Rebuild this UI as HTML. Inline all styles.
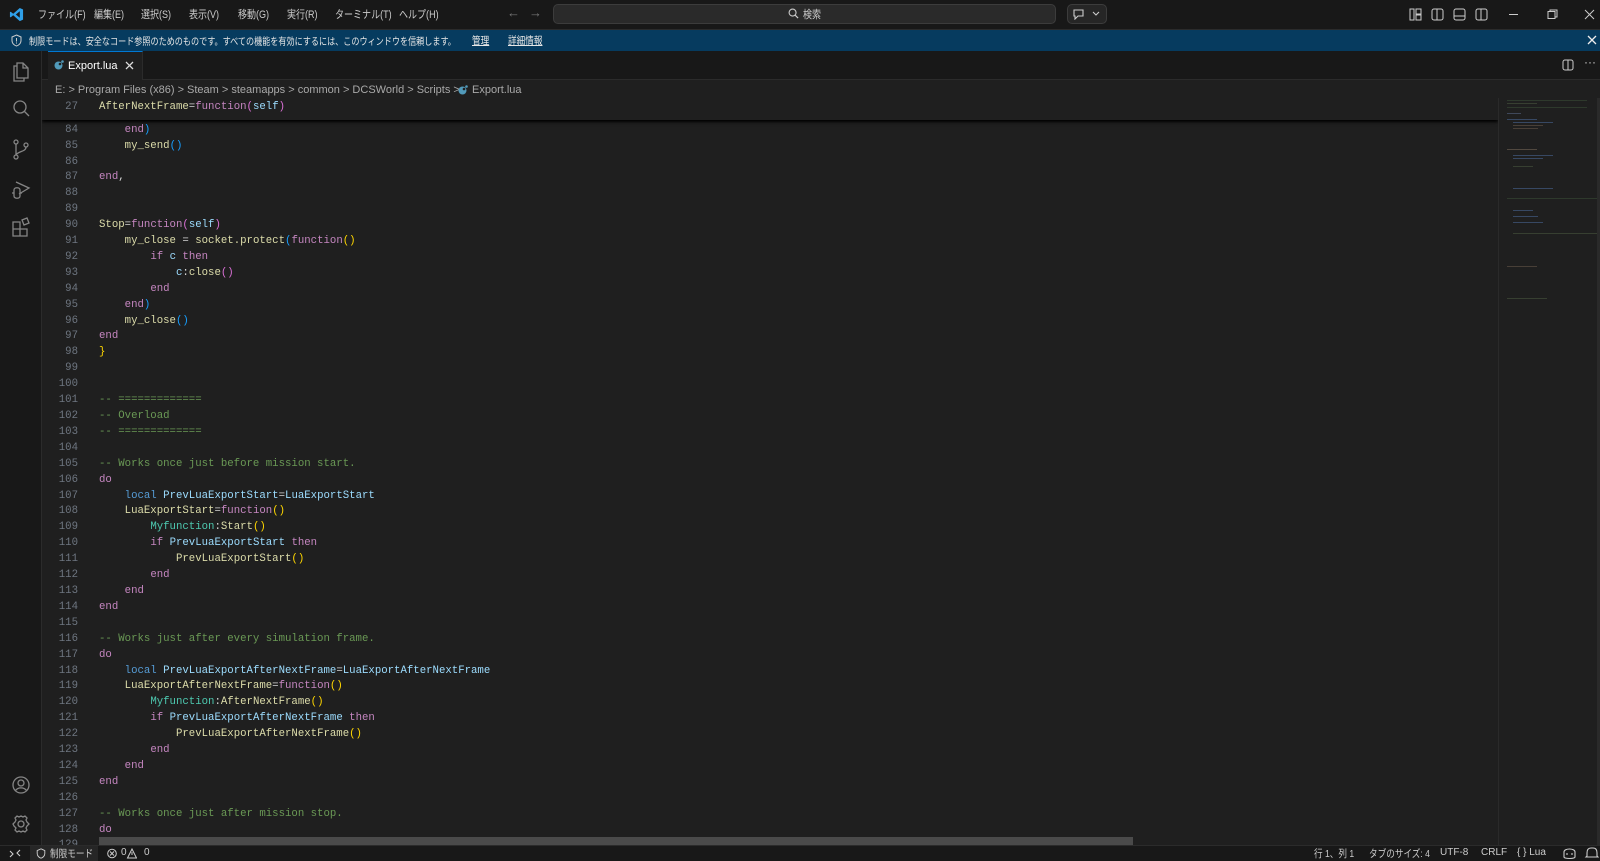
<!DOCTYPE html>
<html><head><meta charset="utf-8"><style>
*{margin:0;padding:0;box-sizing:border-box}
body{width:1600px;height:861px;overflow:hidden;background:#1f1f1f;font-family:"Liberation Sans","Noto Sans CJK JP",sans-serif;color:#ccc;position:relative}
.a{position:absolute}
.ui{font-size:11px;color:#cccccc;white-space:nowrap}
.sq{transform-origin:0 50%;transform:scaleX(0.82)}
#title{left:0;top:0;width:1600px;height:30px;background:#181818;border-bottom:1px solid #2b2b2b}
#banner{left:0;top:30px;width:1600px;height:21px;background:#063b5f}
#act{left:0;top:51px;width:42px;height:794px;background:#181818;border-right:1px solid #2b2b2b}
#tabs{left:42px;top:51px;width:1558px;height:29px;background:#181818;border-bottom:1px solid #2b2b2b}
#tab{left:48px;top:51px;width:95px;height:29px;background:#1f1f1f;border-top:1px solid #0078d4;border-right:1px solid #2b2b2b}
#status{left:0;top:845px;width:1600px;height:16px;background:#181818;border-top:1px solid #2b2b2b}
pre{font-family:"Liberation Mono",monospace;font-size:10.7px;line-height:15.9px;color:#d4d4d4;white-space:pre}
.ln{color:#6e7681;text-align:right;width:36px}
.k{color:#c586c0}.b{color:#569cd6}.v{color:#9cdcfe}.f{color:#dcdcaa}.t{color:#4ec9b0}.c{color:#6a9955}.p1{color:#ffd700}.p2{color:#da70d6}.p3{color:#179fff}
svg{position:absolute}
.mm{position:absolute;height:1px;opacity:.55}
</style></head><body>
<div id="title" class="a"></div>
<svg style="left:9px;top:7px" width="15" height="15" viewBox="0 0 16 16"><path d="M11.5 1 L15 2.6 V13.4 L11.5 15 L4.5 8.8 L1.8 11 L1 10.5 V5.5 L1.8 5 L4.5 7.2 Z M11.5 4.5 L7.3 8 L11.5 11.5Z" fill="#2f9fe8" fill-rule="evenodd"/></svg>
<div class="a ui sq" style="left:38px;top:6px">ファイル(F)</div>
<div class="a ui sq" style="left:94px;top:6px">編集(E)</div>
<div class="a ui sq" style="left:141px;top:6px">選択(S)</div>
<div class="a ui sq" style="left:189px;top:6px">表示(V)</div>
<div class="a ui sq" style="left:238px;top:6px">移動(G)</div>
<div class="a ui sq" style="left:287px;top:6px">実行(R)</div>
<div class="a ui sq" style="left:335px;top:6px">ターミナル(T)</div>
<div class="a ui sq" style="left:399px;top:6px">ヘルプ(H)</div>
<div class="a ui" style="left:507px;top:5px;color:#777;font-size:13px">←</div>
<div class="a ui" style="left:529px;top:5px;color:#777;font-size:13px">→</div>
<div class="a" style="left:553px;top:4px;width:503px;height:20px;background:#2a2a2a;border:1px solid #3c3c3c;border-radius:5px"></div>
<svg style="left:788px;top:8px" width="11" height="11" viewBox="0 0 12 12"><circle cx="5" cy="5" r="3.8" fill="none" stroke="#ccc" stroke-width="1.2"/><path d="M7.8 7.8 L11 11" stroke="#ccc" stroke-width="1.3"/></svg>
<div class="a ui sq" style="left:803px;top:6px">検索</div>
<div class="a" style="left:1067px;top:4px;width:40px;height:20px;background:#262626;border:1px solid #3c3c3c;border-radius:5px"></div>
<svg style="left:1072px;top:8px" width="30" height="12" viewBox="0 0 30 12"><path d="M2 2 H11 V8 H6 L3 11 V8 H2Z" fill="none" stroke="#ccc" stroke-width="1.1"/><path d="M21 4 L24 7 L27 4" fill="none" stroke="#ccc" stroke-width="1.1"/></svg>
<svg style="left:1409px;top:8px" width="90" height="13" viewBox="0 0 90 13"><g fill="none" stroke="#ccc" stroke-width="1"><rect x="1" y="1" width="4" height="11"/><rect x="7" y="1" width="5" height="5"/><rect x="7" y="7" width="5" height="5"/><rect x="23" y="1" width="11" height="11" rx="2"/><path d="M28 1 V12"/><rect x="45" y="1" width="11" height="11" rx="2"/><path d="M45 8 H56"/><rect x="67" y="1" width="11" height="11" rx="2"/><path d="M72 1 V12"/></g></svg>
<svg style="left:1508px;top:9px" width="90" height="11" viewBox="0 0 90 11"><g fill="none" stroke="#ccc" stroke-width="1"><path d="M1 5.5 H10"/><rect x="40" y="2.5" width="7" height="7"/><path d="M42 2.5 V1 H49 V8 H47"/><path d="M77 1 L86 10 M86 1 L77 10"/></g></svg>

<div id="banner" class="a"></div>
<svg style="left:11px;top:34px" width="11" height="13" viewBox="0 0 11 13"><path d="M5.5 1 L10 3 V6.5 C10 9.5 7.5 11.5 5.5 12 C3.5 11.5 1 9.5 1 6.5 V3Z" fill="none" stroke="#ccc" stroke-width="1"/><path d="M5.5 4 V7.5 M5.5 8.5 V9.5" stroke="#ccc"/></svg>
<div class="a ui" style="left:29px;top:33px;font-size:10px;color:#e6e6e6;transform-origin:0 50%;transform:scaleX(0.81)">制限モードは、安全なコード参照のためのものです。すべての機能を有効にするには、このウィンドウを信頼します。</div>
<div class="a ui sq" style="left:472px;top:33px;font-size:10.5px;color:#e6e6e6;text-decoration:underline">管理</div>
<div class="a ui sq" style="left:508px;top:33px;font-size:10.5px;color:#e6e6e6;text-decoration:underline">詳細情報</div>
<svg style="left:1587px;top:35px" width="10" height="10" viewBox="0 0 10 10"><path d="M1 1 L9 9 M9 1 L1 9" stroke="#eee" stroke-width="1.3"/></svg>

<div id="act" class="a"></div>
<svg style="left:11px;top:60px" width="20" height="190" viewBox="0 0 20 190" fill="none" stroke="#858585" stroke-width="1.3">
<path d="M6 3 H12 L17 8 V18 H6Z M12 3 V8 H17 M6 6 H3 V21 H13 V18"/>
<circle cx="9" cy="47" r="6"/><path d="M13.5 51.5 L18 56"/>
<circle cx="5" cy="82" r="2"/><circle cx="5" cy="97" r="2"/><circle cx="15" cy="85" r="2"/><path d="M5 84 V95 M15 87 C15 92 7 91 5 95"/>
<path d="M5 122 L18 128 L8 134 M3 130 C3 127 9 127 9 130 V136 C9 139 3 139 3 136Z M1 133 H3 M9 133 H11"/>
<path d="M2 162 H9 V169 H2Z M2 169 H9 V176 H2Z M9 169 H16 V176 H9Z M11 160 L16 158 L18 163 L13 165Z"/>
</svg>
<svg style="left:11px;top:775px" width="20" height="60" viewBox="0 0 20 60" fill="none" stroke="#858585" stroke-width="1.3">
<circle cx="10" cy="10" r="8"/><circle cx="10" cy="8" r="3"/><path d="M4.5 15.5 C7 12 13 12 15.5 15.5"/>
<circle cx="10" cy="49" r="3"/><path d="M10 41 L12 42 L14 41 L16 43 L15 45 L16 47 L18 49 L16 51 L15 53 L16 55 L14 57 L12 56 L10 57 L8 56 L6 57 L4 55 L5 53 L3 51 L2 49 L4 47 L5 45 L4 43 L6 41 L8 42Z"/>
</svg>

<div id="tabs" class="a"></div>
<div id="tab" class="a"></div>
<svg style="left:54px;top:60px" width="10" height="10" viewBox="0 0 10 10"><circle cx="4.5" cy="5.5" r="4" fill="#519aba"/><circle cx="8.5" cy="1.5" r="1.3" fill="#519aba"/><circle cx="6" cy="4" r="1.3" fill="#1f1f1f"/></svg>
<div class="a ui" style="left:68px;top:60px;color:#fff">Export.lua</div>
<svg style="left:125px;top:61px" width="9" height="9" viewBox="0 0 9 9"><path d="M1 1 L8 8 M8 1 L1 8" stroke="#ddd" stroke-width="1.3"/></svg>
<svg style="left:1562px;top:59px" width="12" height="12" viewBox="0 0 12 12"><rect x="1" y="1" width="10" height="10" rx="2" fill="none" stroke="#ccc"/><path d="M6 1 V11" stroke="#ccc"/></svg>
<div class="a ui" style="left:1584px;top:55px;font-size:12px">···</div>

<div class="a ui" style="left:55px;top:84px;color:#a9a9a9">E: &gt; Program Files (x86) &gt; Steam &gt; steamapps &gt; common &gt; DCSWorld &gt; Scripts &gt;</div>
<svg style="left:458px;top:85px" width="10" height="10" viewBox="0 0 10 10"><circle cx="4.5" cy="5.5" r="4" fill="#519aba"/><circle cx="8.5" cy="1.5" r="1.3" fill="#519aba"/><circle cx="6" cy="4" r="1.3" fill="#1f1f1f"/></svg>
<div class="a ui" style="left:472px;top:84px;color:#a9a9a9">Export.lua</div>

<div class="a" style="left:42px;top:98px;width:1456px;height:747px;overflow:hidden">
<pre class="a ln" style="left:0;top:8.8px">83
84
85
86
87
88
89
90
91
92
93
94
95
96
97
98
99
100
101
102
103
104
105
106
107
108
109
110
111
112
113
114
115
116
117
118
119
120
121
122
123
124
125
126
127
128
129</pre>
<pre class="a" style="left:57px;top:8.8px">    <span class="f">my_send</span> = <span class="f">socket.protect</span><span class="p3">(</span><span class="k">function</span><span class="p1">()</span>
    <span class="k">end</span><span class="p3">)</span>
    <span class="f">my_send</span><span class="p3">()</span>

<span class="k">end</span>,


<span class="f">Stop</span>=<span class="k">function</span><span class="p2">(</span><span class="v">self</span><span class="p2">)</span>
    <span class="f">my_close</span> = <span class="f">socket.protect</span><span class="p3">(</span><span class="k">function</span><span class="p1">()</span>
        <span class="k">if</span> <span class="v">c</span> <span class="k">then</span>
            <span class="v">c</span>:<span class="f">close</span><span class="p2">()</span>
        <span class="k">end</span>
    <span class="k">end</span><span class="p3">)</span>
    <span class="f">my_close</span><span class="p3">()</span>
<span class="k">end</span>
<span class="p1">}</span>


<span class="c">-- =============</span>
<span class="c">-- Overload</span>
<span class="c">-- =============</span>

<span class="c">-- Works once just before mission start.</span>
<span class="k">do</span>
    <span class="b">local</span> <span class="v">PrevLuaExportStart</span>=<span class="v">LuaExportStart</span>
    <span class="f">LuaExportStart</span>=<span class="k">function</span><span class="p1">()</span>
        <span class="t">Myfunction</span>:<span class="f">Start</span><span class="p1">()</span>
        <span class="k">if</span> <span class="v">PrevLuaExportStart</span> <span class="k">then</span>
            <span class="f">PrevLuaExportStart</span><span class="p1">()</span>
        <span class="k">end</span>
    <span class="k">end</span>
<span class="k">end</span>

<span class="c">-- Works just after every simulation frame.</span>
<span class="k">do</span>
    <span class="b">local</span> <span class="v">PrevLuaExportAfterNextFrame</span>=<span class="v">LuaExportAfterNextFrame</span>
    <span class="f">LuaExportAfterNextFrame</span>=<span class="k">function</span><span class="p1">()</span>
        <span class="t">Myfunction</span>:<span class="f">AfterNextFrame</span><span class="p1">()</span>
        <span class="k">if</span> <span class="v">PrevLuaExportAfterNextFrame</span> <span class="k">then</span>
            <span class="f">PrevLuaExportAfterNextFrame</span><span class="p1">()</span>
        <span class="k">end</span>
    <span class="k">end</span>
<span class="k">end</span>

<span class="c">-- Works once just after mission stop.</span>
<span class="k">do</span>
    <span class="b">local</span> <span class="v">PrevLuaExportStop</span>=<span class="v">LuaExportStop</span></pre>
<div class="a" style="left:0;top:0;width:1456px;height:22px;background:#1f1f1f;box-shadow:0 2px 3px #000"></div>
<pre class="a ln" style="left:0;top:1.5px">27</pre>
<pre class="a" style="left:57px;top:1.5px"><span class="f">AfterNextFrame</span>=<span class="k">function</span><span class="p2">(</span><span class="v">self</span><span class="p2">)</span></pre>
<div class="a" style="left:57px;top:739px;width:1034px;height:8px;background:#4a4a4a"></div>
</div>

<div class="a" style="left:1498px;top:98px;width:102px;height:747px;background:#1f1f1f;border-left:1px solid #2a2a2a">
<div class="mm" style="left:8px;top:2px;width:80px;background:#3b4f36"></div>
<div class="mm" style="left:8px;top:5px;width:30px;background:#4a5a3f"></div>
<div class="mm" style="left:8px;top:9px;width:80px;background:#3b4f36"></div>
<div class="mm" style="left:8px;top:15px;width:14px;background:#5a6a8a"></div>
<div class="mm" style="left:8px;top:21px;width:30px;background:#4a6a9a"></div>
<div class="mm" style="left:14px;top:24px;width:40px;background:#4a6a9a"></div>
<div class="mm" style="left:14px;top:27px;width:30px;background:#6a5a4a"></div>
<div class="mm" style="left:14px;top:30px;width:25px;background:#6a5a4a"></div>
<div class="mm" style="left:8px;top:51px;width:30px;background:#7a6a5a"></div>
<div class="mm" style="left:14px;top:57px;width:40px;background:#4a6a9a"></div>
<div class="mm" style="left:14px;top:60px;width:30px;background:#4a6a9a"></div>
<div class="mm" style="left:14px;top:68px;width:20px;background:#4a5a3f"></div>
<div class="mm" style="left:14px;top:90px;width:40px;background:#4a6a9a"></div>
<div class="mm" style="left:8px;top:100px;width:90px;background:#3b4f36"></div>
<div class="mm" style="left:14px;top:112px;width:20px;background:#4a6a9a"></div>
<div class="mm" style="left:14px;top:118px;width:25px;background:#4a6a9a"></div>
<div class="mm" style="left:14px;top:124px;width:30px;background:#4a6a9a"></div>
<div class="mm" style="left:14px;top:135px;width:90px;background:#4a5a3f"></div>
<div class="mm" style="left:8px;top:168px;width:30px;background:#6a5a4a"></div>
<div class="mm" style="left:8px;top:200px;width:40px;background:#4a5a3f"></div>
</div>
<div class="a" style="left:1597px;top:98px;width:3px;height:747px;background:#2a2a2a"></div>

<div id="status" class="a"></div>
<svg style="left:9px;top:848px" width="12" height="11" viewBox="0 0 12 11"><path d="M1 3 L4 6 L1 9 M11 2 L8 5 L11 8" fill="none" stroke="#ccc" stroke-width="1.1"/></svg>
<div class="a" style="left:30px;top:846px;width:68px;height:15px;background:#262626"></div>
<svg style="left:36px;top:848px" width="10" height="11" viewBox="0 0 11 13"><path d="M5.5 1 L10 3 V6.5 C10 9.5 7.5 11.5 5.5 12 C3.5 11.5 1 9.5 1 6.5 V3Z" fill="none" stroke="#ccc" stroke-width="1.1"/></svg>
<div class="a ui sq" style="left:50px;top:846px;font-size:10.5px">制限モード</div>
<svg style="left:107px;top:848px" width="30" height="11" viewBox="0 0 30 11"><circle cx="5" cy="5.5" r="4.3" fill="none" stroke="#ccc"/><path d="M3 3.5 L7 7.5 M7 3.5 L3 7.5" stroke="#ccc"/><path d="M25 1 L29.5 10 H20.5Z M25 4 V7" fill="none" stroke="#ccc"/></svg>
<div class="a ui" style="left:121px;top:847px;font-size:10px">0</div>
<div class="a ui" style="left:144px;top:847px;font-size:10px">0</div>
<div class="a ui sq" style="left:1314px;top:846px;font-size:10.5px">行 1、列 1</div>
<div class="a ui sq" style="left:1369px;top:846px;font-size:10.5px">タブのサイズ: 4</div>
<div class="a ui" style="left:1440px;top:847px;font-size:10px">UTF-8</div>
<div class="a ui" style="left:1481px;top:847px;font-size:10px">CRLF</div>
<div class="a ui" style="left:1517px;top:847px;font-size:10px">{ } Lua</div>
<svg style="left:1563px;top:847px" width="36" height="13" viewBox="0 0 36 13"><g fill="none" stroke="#ccc" stroke-width="1.1"><path d="M1 5 C1 1 12 1 12 5 V10 C12 12 1 12 1 10Z M4 6 V8 M9 6 V8"/><path d="M28 1 C25 1 24 3 24 6 V9 L23 10 H35 L34 9 V6 C34 3 33 1 30 1Z"/></g></svg>
</body></html>
